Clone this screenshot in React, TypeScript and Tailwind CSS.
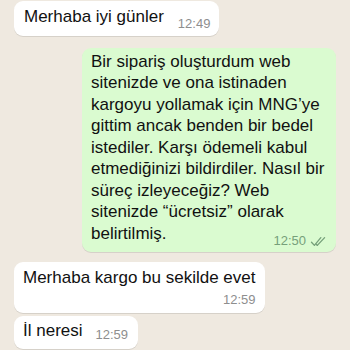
const lines = [
  "Bir sipariş oluşturdum web",
  "sitenizde ve ona istinaden",
  "kargoyu yollamak için MNG’ye",
  "gittim ancak benden bir bedel",
  "istediler. Karşı ödemeli kabul",
  "etmediğinizi bildirdiler. Nasıl bir",
  "süreç izleyeceğiz? Web",
  "sitenizde “ücretsiz” olarak",
];

function Ticks() {
  return (
    <svg width="16" height="11" viewBox="0 0 16 11" fill="none" className="ml-[4px]">
      <path d="M1.5 6.2 L4.4 9.4 L10.8 1.6" stroke="#76a07a" strokeWidth="1.3" strokeLinecap="round" strokeLinejoin="round" />
      <path d="M7.3 9.4 L14.6 1.6" stroke="#76a07a" strokeWidth="1.3" strokeLinecap="round" />
      <path d="M6.2 8.2 L7.3 9.4" stroke="#76a07a" strokeWidth="1.3" strokeLinecap="round" />
    </svg>
  );
}

export default function App() {
  return (
    <div className="w-[350px] h-[350px] overflow-hidden bg-[#efe9e0] font-['Liberation_Sans',Arial,sans-serif] text-[#111]">
      <div className="flex flex-col pt-px px-[14px]">
        {/* incoming */}
        <div className="self-start flex items-end rounded-[9px] bg-white pl-[10px] pr-[9px] pt-[5px] pb-[8px] shadow-[0_1px_0.5px_rgba(0,0,0,0.1)]">
          <span className="text-[17px] leading-[21.5px] whitespace-nowrap">Merhaba iyi günler</span>
          <span className="ml-[14px] text-[13px] leading-[16px] text-[#8e8e8e] translate-y-[4px]">12:49</span>
        </div>

        {/* outgoing */}
        <div className="self-end mt-[12px] w-[254px] rounded-[9px] bg-[#dafbd0] pl-[9px] pr-[10px] pt-[3px] pb-[8px] shadow-[0_1px_0.5px_rgba(0,0,0,0.1)]">
          {lines.map((l) => (
            <div key={l} className="text-[17px] leading-[21.5px] whitespace-nowrap">
              {l}
            </div>
          ))}
          <div className="flex items-end justify-between">
            <span className="text-[17px] leading-[21.5px]">belirtilmiş.</span>
            <span className="flex items-center text-[13px] leading-[16px] text-[#76a07a] translate-y-[5px]">
              12:50
              <Ticks />
            </span>
          </div>
        </div>

        {/* incoming */}
        <div className="self-start mt-[10px] flex flex-col rounded-[9px] bg-white pl-[9px] pr-[10px] pt-[5px] pb-[5px] shadow-[0_1px_0.5px_rgba(0,0,0,0.1)]">
          <span className="text-[17px] leading-[21.5px] whitespace-nowrap">Merhaba kargo bu sekilde evet</span>
          <span className="self-end mt-[3px] text-[13px] leading-[16px] text-[#8e8e8e]">12:59</span>
        </div>

        <div className="self-start mt-[3px] flex items-end rounded-[9px] bg-white pl-[9px] pr-[10px] pt-[4px] pb-[8px] shadow-[0_1px_0.5px_rgba(0,0,0,0.1)]">
          <span className="text-[17px] leading-[21.5px] whitespace-nowrap">İl neresi</span>
          <span className="ml-[13px] text-[13px] leading-[16px] text-[#8e8e8e] translate-y-[2px]">12:59</span>
        </div>
      </div>
    </div>
  );
}
